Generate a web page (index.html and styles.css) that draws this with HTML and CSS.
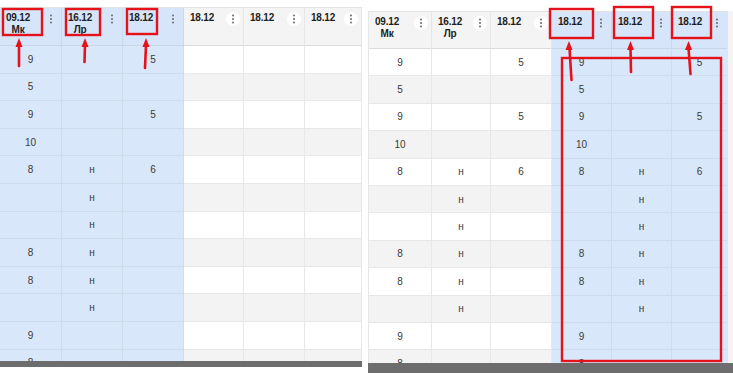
FILE: index.html
```html
<!DOCTYPE html>
<html lang="ru">
<head>
<meta charset="utf-8">
<title>Таблица</title>
<link rel="stylesheet" href="styles.css">
</head>
<body>
<div class="page">
  <section class="panel panel-left">
    <div class="grid">
      <div class="row head">
        <div class="hc sel"><span class="lbl">09.12<br>Мк</span><span class="kebab"><svg viewBox="0 0 4 10" width="4" height="10"><circle cx="2" cy="1.5" r="1"/><circle cx="2" cy="5" r="1"/><circle cx="2" cy="8.5" r="1"/></svg></span></div>
        <div class="hc sel"><span class="lbl">16.12<br>Лр</span><span class="kebab"><svg viewBox="0 0 4 10" width="4" height="10"><circle cx="2" cy="1.5" r="1"/><circle cx="2" cy="5" r="1"/><circle cx="2" cy="8.5" r="1"/></svg></span></div>
        <div class="hc sel"><span class="lbl">18.12</span><span class="kebab"><svg viewBox="0 0 4 10" width="4" height="10"><circle cx="2" cy="1.5" r="1"/><circle cx="2" cy="5" r="1"/><circle cx="2" cy="8.5" r="1"/></svg></span></div>
        <div class="hc"><span class="lbl">18.12</span><span class="kebab"><svg viewBox="0 0 4 10" width="4" height="10"><circle cx="2" cy="1.5" r="1"/><circle cx="2" cy="5" r="1"/><circle cx="2" cy="8.5" r="1"/></svg></span></div>
        <div class="hc"><span class="lbl">18.12</span><span class="kebab"><svg viewBox="0 0 4 10" width="4" height="10"><circle cx="2" cy="1.5" r="1"/><circle cx="2" cy="5" r="1"/><circle cx="2" cy="8.5" r="1"/></svg></span></div>
        <div class="hc"><span class="lbl">18.12</span><span class="kebab"><svg viewBox="0 0 4 10" width="4" height="10"><circle cx="2" cy="1.5" r="1"/><circle cx="2" cy="5" r="1"/><circle cx="2" cy="8.5" r="1"/></svg></span></div>
      </div>
      <div class="row"><div class="c sel">9</div><div class="c sel"></div><div class="c sel">5</div><div class="c"></div><div class="c"></div><div class="c"></div></div>
      <div class="row alt"><div class="c sel">5</div><div class="c sel"></div><div class="c sel"></div><div class="c"></div><div class="c"></div><div class="c"></div></div>
      <div class="row"><div class="c sel">9</div><div class="c sel"></div><div class="c sel">5</div><div class="c"></div><div class="c"></div><div class="c"></div></div>
      <div class="row alt"><div class="c sel">10</div><div class="c sel"></div><div class="c sel"></div><div class="c"></div><div class="c"></div><div class="c"></div></div>
      <div class="row"><div class="c sel">8</div><div class="c sel">н</div><div class="c sel">6</div><div class="c"></div><div class="c"></div><div class="c"></div></div>
      <div class="row alt"><div class="c sel"></div><div class="c sel">н</div><div class="c sel"></div><div class="c"></div><div class="c"></div><div class="c"></div></div>
      <div class="row"><div class="c sel"></div><div class="c sel">н</div><div class="c sel"></div><div class="c"></div><div class="c"></div><div class="c"></div></div>
      <div class="row alt"><div class="c sel">8</div><div class="c sel">н</div><div class="c sel"></div><div class="c"></div><div class="c"></div><div class="c"></div></div>
      <div class="row"><div class="c sel">8</div><div class="c sel">н</div><div class="c sel"></div><div class="c"></div><div class="c"></div><div class="c"></div></div>
      <div class="row alt"><div class="c sel"></div><div class="c sel">н</div><div class="c sel"></div><div class="c"></div><div class="c"></div><div class="c"></div></div>
      <div class="row"><div class="c sel">9</div><div class="c sel"></div><div class="c sel"></div><div class="c"></div><div class="c"></div><div class="c"></div></div>
      <div class="row alt"><div class="c sel">8</div><div class="c sel"></div><div class="c sel"></div><div class="c"></div><div class="c"></div><div class="c"></div></div>
    </div>
    <div class="hscroll"></div>
  </section>

  <section class="panel panel-right">
    <div class="grid-wrap">
      <div class="grid">
        <div class="row head">
          <div class="hc"><span class="lbl">09.12<br>Мк</span><span class="kebab"><svg viewBox="0 0 4 10" width="4" height="10"><circle cx="2" cy="1.5" r="1"/><circle cx="2" cy="5" r="1"/><circle cx="2" cy="8.5" r="1"/></svg></span></div>
          <div class="hc"><span class="lbl">16.12<br>Лр</span><span class="kebab"><svg viewBox="0 0 4 10" width="4" height="10"><circle cx="2" cy="1.5" r="1"/><circle cx="2" cy="5" r="1"/><circle cx="2" cy="8.5" r="1"/></svg></span></div>
          <div class="hc"><span class="lbl">18.12</span><span class="kebab"><svg viewBox="0 0 4 10" width="4" height="10"><circle cx="2" cy="1.5" r="1"/><circle cx="2" cy="5" r="1"/><circle cx="2" cy="8.5" r="1"/></svg></span></div>
          <div class="hc sel"><span class="lbl">18.12</span><span class="kebab"><svg viewBox="0 0 4 10" width="4" height="10"><circle cx="2" cy="1.5" r="1"/><circle cx="2" cy="5" r="1"/><circle cx="2" cy="8.5" r="1"/></svg></span></div>
          <div class="hc sel"><span class="lbl">18.12</span><span class="kebab"><svg viewBox="0 0 4 10" width="4" height="10"><circle cx="2" cy="1.5" r="1"/><circle cx="2" cy="5" r="1"/><circle cx="2" cy="8.5" r="1"/></svg></span></div>
          <div class="hc sel"><span class="lbl">18.12</span><span class="kebab"><svg viewBox="0 0 4 10" width="4" height="10"><circle cx="2" cy="1.5" r="1"/><circle cx="2" cy="5" r="1"/><circle cx="2" cy="8.5" r="1"/></svg></span></div>
        </div>
        <div class="row"><div class="c">9</div><div class="c"></div><div class="c">5</div><div class="c sel">9</div><div class="c sel"></div><div class="c sel">5</div></div>
        <div class="row alt"><div class="c">5</div><div class="c"></div><div class="c"></div><div class="c sel">5</div><div class="c sel"></div><div class="c sel"></div></div>
        <div class="row"><div class="c">9</div><div class="c"></div><div class="c">5</div><div class="c sel">9</div><div class="c sel"></div><div class="c sel">5</div></div>
        <div class="row alt"><div class="c">10</div><div class="c"></div><div class="c"></div><div class="c sel">10</div><div class="c sel"></div><div class="c sel"></div></div>
        <div class="row"><div class="c">8</div><div class="c">н</div><div class="c">6</div><div class="c sel">8</div><div class="c sel">н</div><div class="c sel">6</div></div>
        <div class="row alt"><div class="c"></div><div class="c">н</div><div class="c"></div><div class="c sel"></div><div class="c sel">н</div><div class="c sel"></div></div>
        <div class="row"><div class="c"></div><div class="c">н</div><div class="c"></div><div class="c sel"></div><div class="c sel">н</div><div class="c sel"></div></div>
        <div class="row alt"><div class="c">8</div><div class="c">н</div><div class="c"></div><div class="c sel">8</div><div class="c sel">н</div><div class="c sel"></div></div>
        <div class="row"><div class="c">8</div><div class="c">н</div><div class="c"></div><div class="c sel">8</div><div class="c sel">н</div><div class="c sel"></div></div>
        <div class="row alt"><div class="c"></div><div class="c">н</div><div class="c"></div><div class="c sel"></div><div class="c sel">н</div><div class="c sel"></div></div>
        <div class="row"><div class="c">9</div><div class="c"></div><div class="c"></div><div class="c sel">9</div><div class="c sel"></div><div class="c sel"></div></div>
        <div class="row alt"><div class="c">8</div><div class="c"></div><div class="c"></div><div class="c sel">8</div><div class="c sel"></div><div class="c sel"></div></div>
      </div>
      <div class="vstrip"></div>
    </div>
    <div class="hscroll"></div>
  </section>

  <svg class="annot" width="733" height="373" viewBox="0 0 733 373">
    <g fill="none" stroke="#e5121b" stroke-width="2.4">
      <rect x="3" y="9" width="39" height="26"/>
      <rect x="66" y="9" width="34" height="26"/>
      <rect x="127" y="9" width="30" height="25"/>
      <rect x="550" y="9" width="43" height="29"/>
      <rect x="614" y="7" width="39" height="31"/>
      <rect x="672" y="7" width="39" height="31"/>
      <rect x="562" y="58" width="159" height="303"/>
    </g>
    <g fill="none" stroke="#e5121b" stroke-width="2.6" stroke-linecap="round">
      <line x1="19" y1="66" x2="19" y2="45"/>
      <line x1="84.5" y1="62" x2="85" y2="45"/>
      <line x1="145" y1="68" x2="146" y2="45"/>
      <line x1="571.5" y1="80" x2="569.5" y2="48"/>
      <line x1="631" y1="72" x2="630.5" y2="48"/>
      <line x1="690.5" y1="74" x2="688.5" y2="48"/>
    </g>
    <g fill="#e5121b">
      <polygon points="19,38 15.5,47 22.5,47"/>
      <polygon points="85,38 81.5,47 88.5,47"/>
      <polygon points="146,38 142.5,47 149.5,47"/>
      <polygon points="569,41 565.5,50 572.5,50"/>
      <polygon points="630.5,41 627,50 634,50"/>
      <polygon points="688.5,41 685,50 692,50"/>
    </g>
  </svg>
</div>
</body>
</html>
```

FILE: styles.css
```css
* { box-sizing: border-box; }

html, body {
  margin: 0;
  padding: 0;
  background: #ffffff;
}

body {
  font-family: "Liberation Sans", Arial, sans-serif;
  color: #3d3d3d;
}

.page {
  position: relative;
  width: 733px;
  height: 373px;
  display: flex;
  align-items: flex-start;
  gap: 6px;
  overflow: hidden;
}

.panel {
  display: flex;
  flex-direction: column;
}

.panel-left {
  width: 362px;
  padding-top: 7px;
  --cols: 62px 61px 61px 60px 61px 57px;
  --head-h: 39px;
  --row-h: 27.6px;
}

.panel-left .grid {
  height: 354px;
  overflow: hidden;
}

.panel-left .hscroll {
  height: 6px;
  background: #6d6d6d;
}

.panel-right {
  width: 365px;
  padding-top: 11px;
  --cols: 63px 59px 61px 60px 60px 56px;
  --head-h: 38px;
  --row-h: 27.4px;
}

.grid-wrap {
  display: flex;
  height: 352px;
  overflow: hidden;
}

.panel-right .grid {
  width: 359px;
  border-left: 1px solid #e6e6e6;
}

.vstrip {
  flex: 1;
  background: #f4f4f4;
  border-left: 1px solid #e4e4e4;
}

.panel-right .hscroll {
  height: 10px;
  background: #6d6d6d;
}

.row {
  display: grid;
  grid-template-columns: var(--cols);
  height: var(--row-h);
}

.row.head {
  height: var(--head-h);
}

.c {
  border-right: 1px solid #e8e8e8;
  border-bottom: 1px solid #e8e8e8;
  background: #ffffff;
  font-size: 10px;
  display: flex;
  align-items: center;
  justify-content: center;
  color: #3a3a3a;
}

.row.alt .c {
  background: #f3f3f3;
}

.c.sel,
.row.alt .c.sel {
  background: #d9e7fb;
  border-right-color: #d0dcee;
  border-bottom-color: #d0dcee;
}

.hc {
  border-top: 1px solid #e2e2e2;
  border-right: 1px solid #e6e6e6;
  border-bottom: 1px solid #dcdcdc;
  background: #f4f4f4;
  display: flex;
  justify-content: space-between;
  align-items: flex-start;
  padding: 4px 3px 0 6px;
}

.hc.sel {
  background: #d7e5fa;
  border-right-color: #ccd9ec;
  border-bottom-color: #c9d6ea;
}

.lbl {
  display: inline-block;
  text-align: center;
  font-weight: bold;
  font-size: 10px;
  line-height: 11.5px;
  color: #1e1e1e;
  letter-spacing: -0.2px;
}

.kebab {
  width: 14px;
  height: 14px;
  border-radius: 50%;
  background: #ffffff;
  display: flex;
  align-items: center;
  justify-content: center;
  flex-shrink: 0;
}

.hc.sel .kebab {
  background: transparent;
}

.kebab svg {
  fill: #6a6a6a;
}

.annot {
  position: absolute;
  left: 0;
  top: 0;
  pointer-events: none;
}
```
